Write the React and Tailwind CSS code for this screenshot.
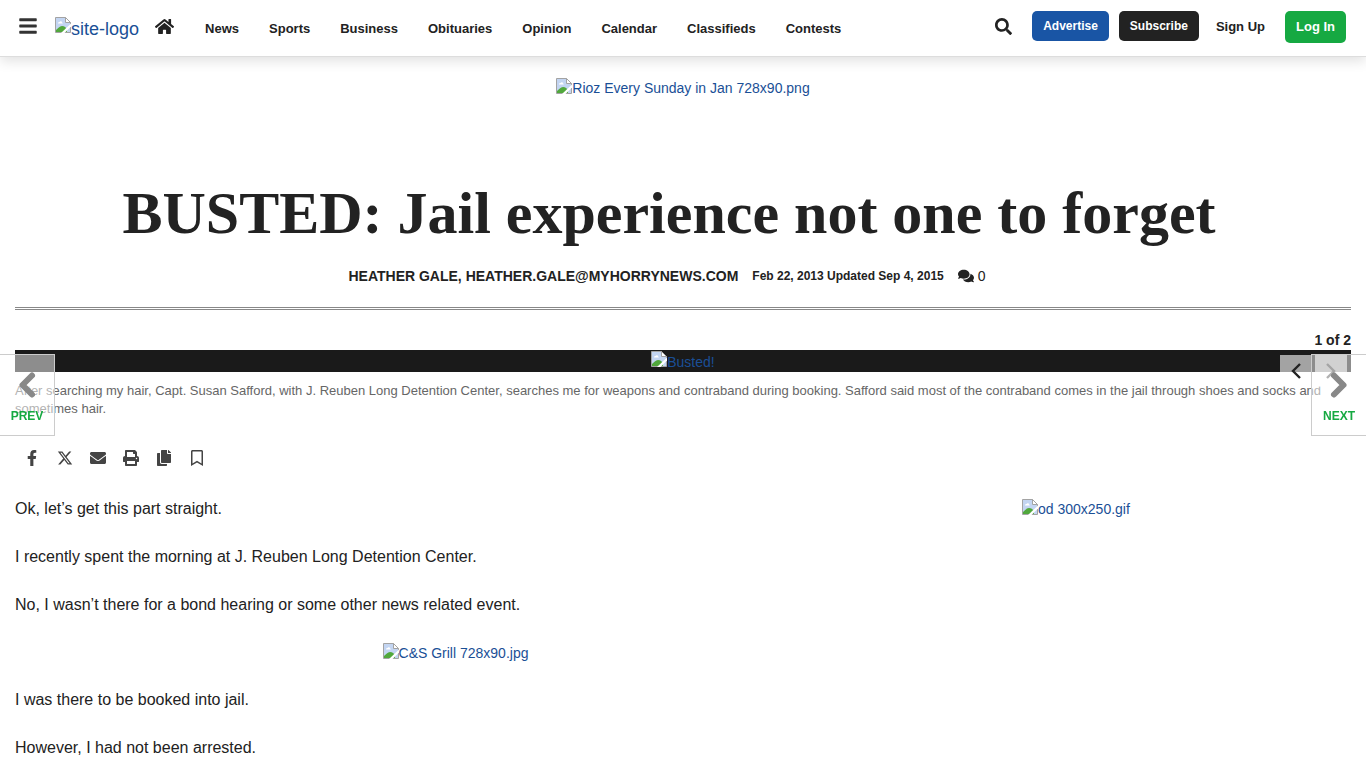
import React from "react";
import {
  FaBars,
  FaHome,
  FaSearch,
  FaFacebookF,
  FaEnvelope,
  FaPrint,
  FaCopy,
  FaRegBookmark,
  FaComments,
} from "react-icons/fa";
import { FaXTwitter } from "react-icons/fa6";

const sections = ["News", "Sports", "Business", "Obituaries", "Opinion", "Calendar", "Classifieds", "Contests"];

const shareLinks = [
  { label: "Facebook", Icon: FaFacebookF },
  { label: "X", Icon: FaXTwitter },
  { label: "Email", Icon: FaEnvelope },
  { label: "Print", Icon: FaPrint },
  { label: "Copy article link", Icon: FaCopy },
  { label: "Save", Icon: FaRegBookmark },
];

function MissingImage({ text }) {
  return (
    <span className="inline-flex items-start">
      <svg width="16" height="16" viewBox="0 0 16 16" className="shrink-0" aria-hidden="true">
        <path d="M.5.5h10l5 5v10H.5z" fill="#c3d5f2" stroke="#a3a3a3" />
        <path d="M3 6.500c0-1.200 1-1.500 1.500-1.500.5-1 2.500-1 2.500.5 1 0 1 1 .5 1z" fill="#fff" />
        <path d="M1 15v-2c2-1.500 3.500-4 6-4s4 1.500 5 3.500V15z" fill="#51a83c" />
        <path d="M10.500.5v5h5z" fill="#fff" stroke="#a3a3a3" />
        <path d="M16 6.500v3L9.500 16H6z" fill="#fff" />
      </svg>
      <span>{text}</span>
    </span>
  );
}

function BoldChevron({ points }) {
  return (
    <svg width="20" height="28" viewBox="0 0 20 28" className="mb-2 text-[#888]" aria-hidden="true">
      <polyline points={points} fill="none" stroke="currentColor" strokeWidth="6" strokeLinejoin="round" strokeLinecap="round" />
    </svg>
  );
}

function ThinChevron({ points }) {
  return (
    <svg width="10" height="16" viewBox="0 0 10 16" aria-hidden="true">
      <polyline points={points} fill="none" stroke="currentColor" strokeWidth="2.4" />
    </svg>
  );
}

export default function App() {
  return (
    <div className="min-h-screen bg-white font-['Liberation_Sans',Arial,sans-serif] text-[#222]">
      <header className="flex h-[57px] items-center border-b border-[#ddd] bg-white pr-5 pl-[18px] shadow-[0_4px_12px_rgba(0,0,0,0.12)]">
        <button type="button" aria-label="Menu" className="mr-[18px] -mt-1 text-[#333]">
          <FaBars size={20} />
        </button>
        <a href="#home" className="-ml-px text-lg leading-6 text-[#1a4f96]">
          <MissingImage text="site-logo" />
        </a>
        <nav aria-label="Sections" className="flex items-center pl-4">
          <a href="#home" aria-label="Home" className="-mt-1 mr-4">
            <FaHome size={19} />
          </a>
          {sections.map((s) => (
            <a key={s} href={"#" + s.toLowerCase()} className="px-[15px] pt-0.5 text-[13px] leading-5 font-bold">
              {s}
            </a>
          ))}
        </nav>
        <div className="-mt-0.5 ml-auto flex items-start text-[13px] leading-5 font-bold">
          <button type="button" aria-label="Search" className="mt-[7px] mr-5">
            <FaSearch size={17} />
          </button>
          <a href="#advertise" className="mr-2.5 rounded-[5px] bg-[#1955a5] px-[11px] py-[5px] text-xs leading-5 text-white">Advertise</a>
          <a href="#subscribe" className="mr-[17px] rounded-[5px] bg-[#222] px-[11px] py-[5px] text-xs leading-5 text-white">Subscribe</a>
          <a href="#signup" className="mr-5 py-1.5">Sign Up</a>
          <a href="#login" className="rounded-[5px] bg-[#16a942] px-[11px] py-1.5 text-white">Log In</a>
        </div>
      </header>

      <main className="px-[15px]">
        <div className="flex h-[111px] justify-center pt-[21px] text-sm leading-5">
          <a href="#ad-top" className="text-[#1a4f96]">
            <MissingImage text="Rioz Every Sunday in Jan 728x90.png" />
          </a>
        </div>

        <div className="border-b-[3px] border-double border-[#888] pb-[21px] text-center">
          <h1 className="pt-3 pr-7 font-['Liberation_Serif','Times_New_Roman',serif] text-[60px] leading-[66px] font-bold">
            BUSTED: Jail experience not one to forget
          </h1>
          <div className="mt-5 flex items-center justify-center pr-8 leading-5">
            <span className="text-sm leading-5 font-bold">HEATHER GALE, HEATHER.GALE@MYHORRYNEWS.COM</span>
            <span className="ml-3.5 text-xs leading-5 font-bold">Feb 22, 2013 Updated Sep 4, 2015</span>
            <a href="#comments" className="ml-3.5 flex items-center gap-1 text-sm leading-5">
              <FaComments size={16} />0
            </a>
          </div>
        </div>

        <section aria-label="Photos">
          <p className="pt-5 text-right text-sm leading-5 font-bold">1 of 2</p>
          <div className="relative flex h-[22px] justify-center bg-[#1a1a1a] pt-px text-sm leading-[22px] text-[#1a4f96]">
            <MissingImage text="Busted!" />
            <div className="absolute top-[5px] right-1 z-10 flex gap-[3px] text-[#222]">
              <button type="button" aria-label="Previous photo" className="flex h-8 w-8 items-center justify-center bg-white/60">
                <ThinChevron points="9,1 2,8 9,15" />
              </button>
              <button type="button" aria-label="Next photo" className="flex h-8 w-8 items-center justify-center bg-white/60 text-[#222]/70">
                <ThinChevron points="1,1 8,8 1,15" />
              </button>
            </div>
          </div>
          <p className="pt-2.5 pr-5 text-[13px] leading-[18px] text-[#666]">
            After searching my hair, Capt. Susan Safford, with J. Reuben Long Detention Center, searches me for weapons and contraband during booking. Safford said most of the contraband comes in the jail through shoes and socks and sometimes hair.
          </p>
        </section>

        <div className="flex pt-8 text-[#444]">
          {shareLinks.map(({ label, Icon }) => (
            <a key={label} href="#share" aria-label={label} className="flex h-4 w-[33px] items-center justify-center">
              <Icon size={16} />
            </a>
          ))}
        </div>

        <div className="flex pt-[31px]">
          <article className="min-w-0 flex-1 text-base leading-6">
            <p className="mb-6">Ok, let’s get this part straight.</p>
            <p className="mb-6">I recently spent the morning at J. Reuben Long Detention Center.</p>
            <p className="mb-6">No, I wasn’t there for a bond hearing or some other news related event.</p>
            <div className="mb-6 flex justify-center pt-0.5 text-sm leading-5">
              <a href="#ad-middle" className="text-[#1a4f96]">
                <MissingImage text="C&S Grill 728x90.jpg" />
              </a>
            </div>
            <p className="mb-6">I was there to be booked into jail.</p>
            <p>However, I had not been arrested.</p>
          </article>
          <aside className="w-[455px] pt-0.5 pl-[126px] text-sm leading-5">
            <a href="#ad-side" className="text-[#1a4f96]">
              <MissingImage text="od 300x250.gif" />
            </a>
          </aside>
        </div>
      </main>

      <a href="#prev" className="fixed top-[354px] left-0 z-20 flex h-[82px] w-[55px] flex-col items-center border border-l-0 border-[#ccc] bg-white/50 pt-4 text-xs leading-[18px] font-bold text-[#16a942]">
        <BoldChevron points="15,4.500 5.500,14 15,23.500" />
        PREV
      </a>
      <a href="#next" className="fixed top-[354px] right-0 z-20 flex h-[82px] w-[55px] flex-col items-center border border-r-0 border-[#ccc] bg-white/50 pt-4 text-xs leading-[18px] font-bold text-[#16a942]">
        <BoldChevron points="5,4.500 14.500,14 5,23.500" />
        NEXT
      </a>
    </div>
  );
}
